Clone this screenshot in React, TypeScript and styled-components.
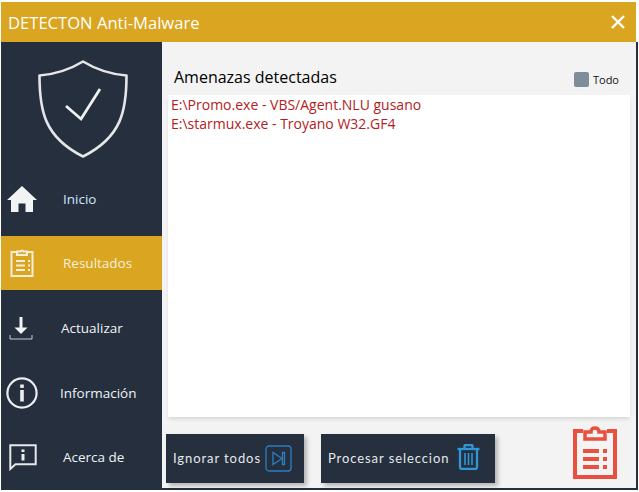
import React from "react";
import styled, { createGlobalStyle } from "styled-components";

const Global = createGlobalStyle`
  html, body { margin: 0; padding: 0; background: #fff; }
  body { font-family: "Open Sans", "Noto Sans", sans-serif; }
`;

const Windowed = styled.div`
  box-sizing: border-box;
  width: 639px;
  height: 492px;
  padding: 2px 1px 2px 1px;
  display: flex;
  flex-direction: column;
  background: #fff;
`;

const Frame = styled.div`
  flex: 1;
  display: flex;
  flex-direction: column;
  min-height: 0;
`;

const TitleBar = styled.header`
  height: 40px;
  flex: none;
  background: #daa520;
  color: #fff;
  display: flex;
  align-items: center;
  justify-content: space-between;
  margin-right: 2px;
  padding: 0 11px 0 7px;
  font-size: 16.6px;
`;

const Title = styled.span`
  letter-spacing: 0;
`;

const Body = styled.div`
  flex: 1;
  display: flex;
  min-height: 0;
  border-right: 2px solid #252f3d;
  border-bottom: 2px solid #252f3d;
  background: #f3f3f3;
`;

const Sidebar = styled.nav`
  width: 161px;
  flex: none;
  background: #252f3d;
  display: flex;
  flex-direction: column;
`;

const Logo = styled.div`
  height: 130px;
  display: flex;
  justify-content: center;
  padding-top: 18px;
  padding-left: 3px;
  box-sizing: border-box;
`;

const Menu = styled.div`
  display: flex;
  flex-direction: column;
`;

const Item = styled.div<{ $active?: boolean; $top: number }>`
  height: 54px;
  margin-top: ${(p) => p.$top}px;
  display: flex;
  align-items: center;
  background: ${(p) => (p.$active ? "#daa520" : "transparent")};
  color: ${(p) => (p.$active ? "#f6f0dc" : "#eef3f8")};
  font-size: 13.5px;
`;

const ItemLabel = styled.span<{ $tint?: string }>`
  color: ${(p) => p.$tint || "inherit"};
`;

const IconSlot = styled.div<{ $w: number; $shift: number }>`
  width: ${(p) => p.$w}px;
  flex: none;
  display: flex;
  justify-content: center;
  align-items: center;
  svg {
    margin-left: ${(p) => p.$shift}px;
  }
`;

const Main = styled.main`
  flex: 1;
  min-width: 0;
  display: flex;
  flex-direction: column;
  padding: 0 6px 0 6px;
`;

const Head = styled.div`
  height: 53px;
  flex: none;
  display: flex;
  align-items: flex-end;
  justify-content: space-between;
  padding: 0 11px 6px 6px;
  box-sizing: border-box;
`;

const Heading = styled.h1`
  margin: 0;
  font-size: 16px;
  font-weight: 400;
  line-height: 24px;
  color: #000;
`;

const CheckLabel = styled.label`
  display: flex;
  align-items: center;
  gap: 4px;
  font-size: 11px;
  color: #111;
  padding-bottom: 2px;
`;

const CheckBox = styled.span`
  width: 15px;
  height: 15px;
  border-radius: 2px;
  background: #7f8c99;
`;

const List = styled.ul`
  margin: 0;
  padding: 0 3px;
  list-style: none;
  height: 322px;
  box-sizing: border-box;
  background: #fff;
  box-shadow: 0 3px 4px -1px rgba(0, 0, 0, 0.12);
  font-size: 14px;
  line-height: 19px;
  color: #b22222;
`;

const Footer = styled.div`
  flex: 1;
  display: flex;
  align-items: flex-start;
  margin-left: -2px;
`;

const Action = styled.button<{ $w: number; $gap: number }>`
  box-sizing: border-box;
  width: ${(p) => p.$w}px;
  height: 49px;
  margin-right: 17px;
  margin-top: 17px;
  border: 0;
  background: #252f3d;
  color: #e6e8ea;
  box-shadow: 3px 3px 4px rgba(0, 0, 0, 0.25);
  display: flex;
  align-items: center;
  gap: ${(p) => p.$gap}px;
  padding: 0 0 0 7px;
  font-family: "Lato", "Roboto", sans-serif;
  font-size: 13px;
  line-height: 16px;
  letter-spacing: 0.92px;
`;

const ActionText = styled.span`
  padding-bottom: 2px;
`;

const Trash = styled.svg`
  margin-bottom: 3px;
`;

const BigIcon = styled.div`
  margin-left: auto;
  margin-right: 13px;
  margin-top: 8px;
`;

const NAV = [
  {
    label: "Inicio",
    slot: 62,
    shift: -20,
    top: 0,
    tint: "#cfe6ff",
    icon: (
      <svg width="30" height="26" viewBox="0 0 30 26">
        <path d="M15 0 L30 14 H26 V26 H18.5 V17.5 H11.5 V26 H4 V14 H0 Z" fill="#f1f3f4" />
      </svg>
    ),
  },
  {
    label: "Resultados",
    slot: 62,
    shift: -20,
    top: 10,
    active: true,
    icon: (
      <svg width="24" height="28" viewBox="0 0 24 28" fill="none" stroke="#f5efdc" strokeWidth="2">
        <path d="M7 3H1.5v24h21V3H17" />
        <path d="M7 6V2.5h3.5a1.6 1.6 0 0 1 3 0H17V6Z" />
        <path d="M6 12h9M6 16.5h9M6 21h9M18 12h2M18 16.5h2M18 21h2" />
      </svg>
    ),
  },
  {
    label: "Actualizar",
    slot: 60,
    shift: -20,
    top: 11,
    icon: (
      <svg width="24" height="24" viewBox="0 0 24 24" fill="none">
        <path d="M12 1v13" stroke="#f1f3f4" strokeWidth="3" />
        <path d="M5.5 11.5H18.5L12 18Z" fill="#f1f3f4" />
        <path d="M1 19v4h22v-4" stroke="#c9cdd2" strokeWidth="1" />
      </svg>
    ),
  },
  {
    label: "Información",
    slot: 59,
    shift: -17,
    top: 11,
    icon: (
      <svg width="32" height="32" viewBox="0 0 32 32" fill="none">
        <circle cx="16" cy="16" r="14.6" stroke="#eceeef" strokeWidth="2.2" />
        <rect x="14.2" y="7.5" width="3.6" height="3.4" fill="#eceeef" />
        <rect x="14.2" y="13" width="3.6" height="11.5" fill="#eceeef" />
      </svg>
    ),
  },
  {
    label: "Acerca de",
    slot: 62,
    shift: -19,
    top: 10,
    icon: (
      <svg width="28" height="27" viewBox="0 0 28 27" fill="none">
        <path d="M1.3 1.3H26.7V20.3H6.5L1.3 25Z" stroke="#e6e8ea" strokeWidth="2" />
        <rect x="12.5" y="5.5" width="3" height="2.5" fill="#eceeef" />
        <rect x="12.5" y="10" width="3" height="6.5" fill="#eceeef" />
      </svg>
    ),
  },
];

export default function App() {
  return (
    <>
      <Global />
      <Windowed>
        <Frame>
          <TitleBar>
            <Title>DETECTON Anti-Malware</Title>
            <svg width="14" height="14" viewBox="0 0 14 14" stroke="#fff" strokeWidth="2.4">
              <path d="M1 1L13 13M13 1L1 13" />
            </svg>
          </TitleBar>
          <Body>
            <Sidebar>
              <Logo>
                <svg width="90" height="98" viewBox="0 0 90 98" fill="none">
                  <path
                    d="M45 1.5C36 7 20 14 1.5 15.5C1.5 50 6 77 45 96.5C84 77 88.5 50 88.5 15.5C70 14 54 7 45 1.5Z"
                    stroke="#e4e6e8"
                    strokeWidth="2.6"
                    strokeLinejoin="round"
                  />
                  <path d="M28 46L43 59L62 29" stroke="#eff1f2" strokeWidth="2.8" />
                </svg>
              </Logo>
              <Menu>
                {NAV.map((n) => (
                  <Item key={n.label} $active={n.active} $top={n.top}>
                    <IconSlot $w={n.slot} $shift={n.shift}>{n.icon}</IconSlot>
                    <ItemLabel $tint={n.tint}>{n.label}</ItemLabel>
                  </Item>
                ))}
              </Menu>
            </Sidebar>
            <Main>
              <Head>
                <Heading>Amenazas detectadas</Heading>
                <CheckLabel>
                  <CheckBox />
                  Todo
                </CheckLabel>
              </Head>
              <List>
                <li>E:\Promo.exe - VBS/Agent.NLU gusano</li>
                <li>E:\starmux.exe - Troyano W32.GF4</li>
              </List>
              <Footer>
                <Action $w={138} $gap={4}>
                  <ActionText>Ignorar todos</ActionText>
                  <svg width="27" height="27" viewBox="0 0 27 27" fill="none" stroke="#2a7fc0" strokeWidth="1.3">
                    <rect x="1" y="1" width="25" height="25" rx="3" />
                    <path d="M8 7.5V19.5L17 13.5Z" />
                    <path d="M17.5 7.5H19.5V19.5H17.5Z" />
                  </svg>
                </Action>
                <Action $w={174} $gap={8}>
                  <ActionText>Procesar seleccion</ActionText>
                  <Trash width="23" height="26" viewBox="0 0 23 26" fill="none" stroke="#2f97d8" strokeWidth="2.3">
                    <path d="M0.5 5H22.5" />
                    <path d="M7.5 5V2a1 1 0 0 1 1-1h6a1 1 0 0 1 1 1v3" />
                    <path d="M3 5V23a2 2 0 0 0 2 2H18a2 2 0 0 0 2-2V5" />
                    <path d="M8 9V21M11.5 9V21M15 9V21" strokeWidth="1.6" />
                  </Trash>
                </Action>
                <BigIcon>
                  <svg width="44" height="55" viewBox="0 0 44 55" fill="none" stroke="#ea5040" strokeWidth="4">
                    <path d="M10 6H2V52H42V6H34" />
                    <path d="M12 7V14H32V7H26C26 1.5 18 1.5 18 7Z" strokeWidth="3.5" />
                    <path d="M10 26H26M10 34H26M10 42H26" />
                    <path d="M30 26H34M30 34H34M30 42H34" />
                  </svg>
                </BigIcon>
              </Footer>
            </Main>
          </Body>
        </Frame>
      </Windowed>
    </>
  );
}
